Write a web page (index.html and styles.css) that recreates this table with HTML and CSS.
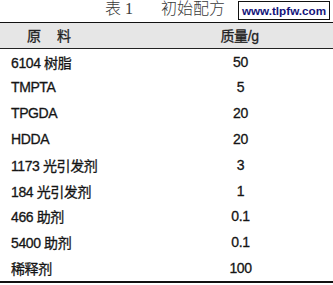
FILE: index.html
```html
<!DOCTYPE html>
<html lang="zh">
<head>
<meta charset="utf-8">
<link rel="stylesheet" href="styles.css">
</head>
<body>
<div class="page">
  <div class="title"><span class="t-num">表 1</span><span class="t-name">初始配方</span></div>
  <div class="mark">www.tlpfw.com</div>
  <div class="table">
    <div class="head c1"><span class="spaced">原料</span></div>
    <div class="head c2">质量/g</div>
    <div class="cell c1">6104 树脂</div><div class="cell c2">50</div>
    <div class="cell c1">TMPTA</div><div class="cell c2">5</div>
    <div class="cell c1">TPGDA</div><div class="cell c2">20</div>
    <div class="cell c1">HDDA</div><div class="cell c2">20</div>
    <div class="cell c1">1173 光引发剂</div><div class="cell c2">3</div>
    <div class="cell c1">184 光引发剂</div><div class="cell c2">1</div>
    <div class="cell c1">466 助剂</div><div class="cell c2">0.1</div>
    <div class="cell c1">5400 助剂</div><div class="cell c2">0.1</div>
    <div class="cell c1">稀释剂</div><div class="cell c2">100</div>
  </div>
</div>
</body>
</html>
```
FILE: styles.css
```css
html, body {
  margin: 0;
  padding: 0;
  background: #fff;
}
.page {
  position: relative;
  width: 333px;
  height: 285px;
  overflow: hidden;
  font-family: "Liberation Sans", "Noto Sans CJK SC", sans-serif;
  color: #151515;
}
.title {
  height: 22px;
  display: flex;
  align-items: flex-start;
  padding-left: 105px;
  font-family: "Liberation Serif", "Noto Sans CJK SC", serif;
  font-size: 16px;
  line-height: 17px;
  font-weight: 300;
  color: #3a3a3a;
  gap: 28px;
}
.mark {
  position: absolute;
  left: 238px;
  top: 1px;
  width: 90px;
  height: 17px;
  border: 1.5px solid #111;
  background: #fff;
  font-family: "Liberation Sans", sans-serif;
  font-weight: bold;
  font-size: 11.7px;
  line-height: 17px;
  text-align: center;
  color: #14147a;
}
.table {
  display: grid;
  grid-template-columns: 148px 185px;
  grid-auto-rows: 25.8px;
  border-top: 1.5px solid #111;
  border-bottom: 2px solid #111;
  font-size: 14px;
  letter-spacing: -0.4px;
  -webkit-text-stroke: 0.3px currentColor;
}
.head {
  height: 24.5px;
  background: #e6e6e6;
  border-bottom: 1px solid #222;
  display: flex;
  align-items: center;
  color: #222;
}
.head.c1 {
  padding-left: 27px;
}
.spaced {
  letter-spacing: 16px;
}
.head.c2 {
  justify-content: center;
  padding-right: 2px;
}
.cell {
  display: flex;
  align-items: center;
}
.cell.c1 {
  padding-left: 11px;
}
.cell.c2 {
  justify-content: center;
}
```
